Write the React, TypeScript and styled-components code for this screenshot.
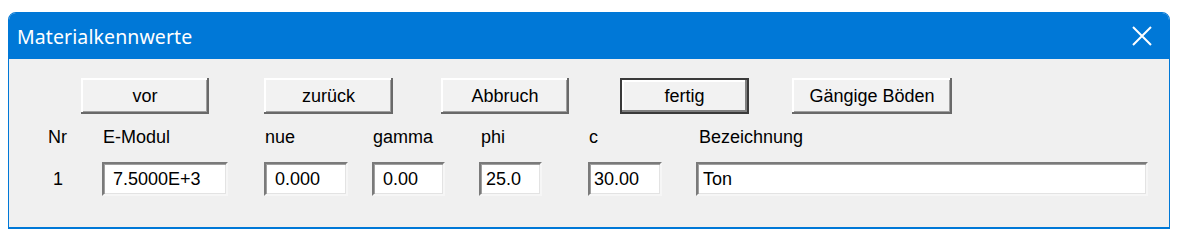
import React from "react"
import styled, { createGlobalStyle, css } from "styled-components"

const BLUE = "#0078d7"
const FACE = "#f0f0f0"

const GlobalStyle = createGlobalStyle`
    html, body {
        margin: 0;
        background: #ffffff;
    }
`

const Page = styled.div`
    padding: 12px 13px 0 8px;
    font-family: "Liberation Sans", Arial, sans-serif;
`

const Window = styled.div`
    width: 1162px;
    box-sizing: border-box;
    border: 1px solid ${BLUE};
    border-bottom-width: 2px;
    border-radius: 8px 8px 0 0;
    background: ${FACE};
    overflow: hidden;
`

const TitleBar = styled.div`
    height: 46px;
    background: ${BLUE};
    display: flex;
    align-items: center;
    justify-content: space-between;
    padding: 0 17px 0 8px;
`

const Title = styled.span`
    color: #ffffff;
    font-family: "Noto Sans", "Open Sans", sans-serif;
    font-size: 19.5px;
    letter-spacing: 0.1px;
`

const CloseIcon = () => (
    <svg width="20" height="20" viewBox="0 0 20 20">
        <path d="M1 1 L19 19 M19 1 L1 19" stroke="#ffffff" strokeWidth="2" fill="none" />
    </svg>
)

const Body = styled.div`
    padding: 19px 0 31px 0;
`

const ButtonRow = styled.div`
    display: flex;
    padding-left: 72px;
`

const Button = styled.button<{ width: number; offset: number; isDefault?: boolean }>`
    width: ${(p) => p.width}px;
    margin-left: ${(p) => p.offset}px;
    height: 36px;
    box-sizing: border-box;
    background: #f2f2f2;
    border: none;
    padding: 0;
    font-family: "Liberation Sans", Arial, sans-serif;
    font-size: 18px;
    color: #000000;
    box-shadow: inset -2px -2px 0 #696969, inset 2px 2px 0 #ffffff, inset -3px -3px 0 #a0a0a0;
    ${(p) =>
        p.isDefault &&
        css`
            box-shadow: inset 0 0 0 2px #3a3a3a, inset -4px -4px 0 #808080,
                inset 4px 4px 0 #ffffff;
        `}
`

const Table = styled.div`
    display: grid;
    grid-template-columns: 54px 162px 108px 107px 109px 108px 452px;
    row-gap: 15px;
    margin-top: 13px;
    padding-left: 39px;
`

const Label = styled.span<{ indent?: number }>`
    font-size: 18px;
    line-height: 20px;
    color: #000000;
    padding-left: ${(p) => p.indent ?? 1}px;
`

const RowNr = styled.span`
    font-size: 18px;
    line-height: 34px;
    padding-left: 5px;
`

const Field = styled.input<{ width: number; inset: number }>`
    width: ${(p) => p.width}px;
    height: 34px;
    box-sizing: border-box;
    background: #ffffff;
    border: 2px solid;
    border-color: #7a7a7a #f6f6f6 #f6f6f6 #7a7a7a;
    box-shadow: inset 1px 1px 0 #a0a0a0, inset -1px -1px 0 #e3e3e3;
    padding: 0 0 0 ${(p) => p.inset}px;
    font-family: "Liberation Sans", Arial, sans-serif;
    font-size: 18px;
    color: #000000;
    outline: none;
`

const columns = [
    { label: "E-Modul", value: "7.5000E+3", width: 126, inset: 9 },
    { label: "nue", value: "0.000", width: 84, inset: 9 },
    { label: "gamma", value: "0.00", width: 73, inset: 9 },
    { label: "phi", value: "25.0", width: 63, inset: 5, indent: 2 },
    { label: "c", value: "30.00", width: 74, inset: 4 },
    { label: "Bezeichnung", value: "Ton", width: 452, inset: 5, indent: 3 },
]

const buttons = [
    { text: "vor", width: 128, offset: 0 },
    { text: "zurück", width: 129, offset: 55 },
    { text: "Abbruch", width: 128, offset: 48 },
    { text: "fertig", width: 129, offset: 51, isDefault: true },
    { text: "Gängige Böden", width: 160, offset: 43 },
]

export default function App() {
    return (
        <>
            <GlobalStyle />
            <Page>
                <Window>
                    <TitleBar>
                        <Title>Materialkennwerte</Title>
                        <CloseIcon />
                    </TitleBar>
                    <Body>
                        <ButtonRow>
                            {buttons.map((b) => (
                                <Button
                                    key={b.text}
                                    width={b.width}
                                    offset={b.offset}
                                    isDefault={b.isDefault}
                                >
                                    {b.text}
                                </Button>
                            ))}
                        </ButtonRow>
                        <Table>
                            <Label indent={0}>Nr</Label>
                            {columns.map((c) => (
                                <Label key={c.label} indent={c.indent}>
                                    {c.label}
                                </Label>
                            ))}
                            <RowNr>1</RowNr>
                            {columns.map((c) => (
                                <div key={c.label}>
                                    <Field
                                        width={c.width}
                                        inset={c.inset}
                                        defaultValue={c.value}
                                    />
                                </div>
                            ))}
                        </Table>
                    </Body>
                </Window>
            </Page>
        </>
    )
}
